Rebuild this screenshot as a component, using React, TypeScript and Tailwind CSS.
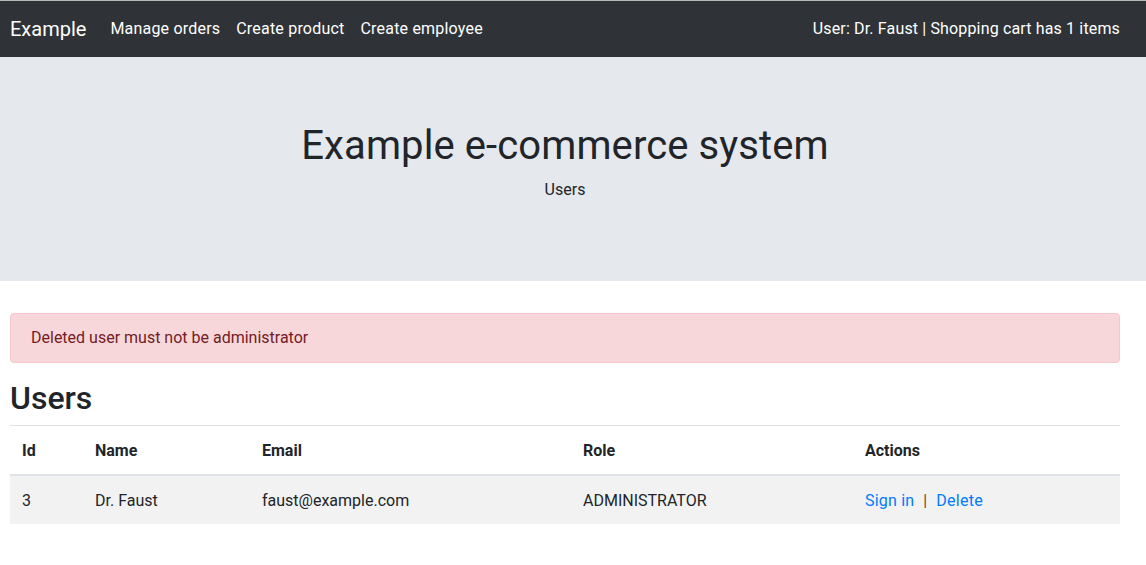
import React from 'react';

const font = { fontFamily: 'Roboto, "Liberation Sans", sans-serif' };

const users = [
  { id: 3, name: 'Dr. Faust', email: 'faust@example.com', role: 'ADMINISTRATOR' },
];

const App: React.FC = () => {
  return (
    <div className="min-h-[565px] bg-white text-[#212529] text-base" style={font}>
      <div className="border-t border-[#b8b8b8]">
        <nav className="h-[56px] bg-[#2f3338] flex items-center px-[10px] text-white tracking-[0.2px]">
          <span className="text-[20px] mr-[24px] tracking-normal">Example</span>
          <div className="flex gap-[16px] text-[16px]">
            <span>Manage orders</span>
            <span>Create product</span>
            <span>Create employee</span>
          </div>
          <span className="ml-auto mr-[16px] text-[16px] tracking-[0.15px]">User: Dr. Faust | Shopping cart has 1 items</span>
        </nav>
      </div>

      <div className="h-[224px] bg-[#e5e8ed]">
        <div className="w-[1110px] ml-[10px] flex flex-col items-center pt-[65px]">
          <h1 className="text-[40px] leading-[48px] text-[#212529] tracking-[0.1px]">Example e-commerce system</h1>
          <p className="mt-[8px] text-[16px] leading-[24px]">Users</p>
        </div>
      </div>

      <div className="w-[1110px] ml-[10px] pt-[32px]">
        <div className="rounded-[4px] border border-[#f5c6cb] bg-[#f8d7da] text-[#721c24] px-[20px] py-[12px] leading-[24px]">
          Deleted user must not be administrator
        </div>
        <h2 className="text-[32px] leading-[38px] mt-[16px] mb-[8px] font-medium">Users</h2>
        <table className="w-full border-collapse text-left">
          <thead>
            <tr className="border-t border-[#dee2e6] border-b-2 border-b-[#dee2e6]">
              <th className="w-[73px] px-[12px] pt-[13px] pb-[11px] leading-[24px] font-bold">Id</th>
              <th className="w-[167px] px-[12px] pt-[13px] pb-[11px] leading-[24px] font-bold">Name</th>
              <th className="w-[321px] px-[12px] pt-[13px] pb-[11px] leading-[24px] font-bold">Email</th>
              <th className="w-[282px] px-[12px] pt-[13px] pb-[11px] leading-[24px] font-bold">Role</th>
              <th className="px-[12px] pt-[13px] pb-[11px] leading-[24px] font-bold">Actions</th>
            </tr>
          </thead>
          <tbody>
            {users.map((u) => (
              <tr key={u.id} className="bg-[#f2f2f2]">
                <td className="px-[12px] pt-[13px] pb-[11px] leading-[24px]">{u.id}</td>
                <td className="px-[12px] pt-[13px] pb-[11px] leading-[24px]">{u.name}</td>
                <td className="px-[12px] pt-[13px] pb-[11px] leading-[24px]">{u.email}</td>
                <td className="px-[12px] pt-[13px] pb-[11px] leading-[24px]">{u.role}</td>
                <td className="px-[12px] pt-[13px] pb-[11px] leading-[24px]">
                  <span className="text-[#007bff] tracking-[0.2px]">Sign in</span>
                  <span className="text-[#7d3c1f] mx-[9px]">|</span>
                  <span className="text-[#007bff] tracking-[0.3px]">Delete</span>
                </td>
              </tr>
            ))}
          </tbody>
        </table>
      </div>
    </div>
  );
};

export default App;
